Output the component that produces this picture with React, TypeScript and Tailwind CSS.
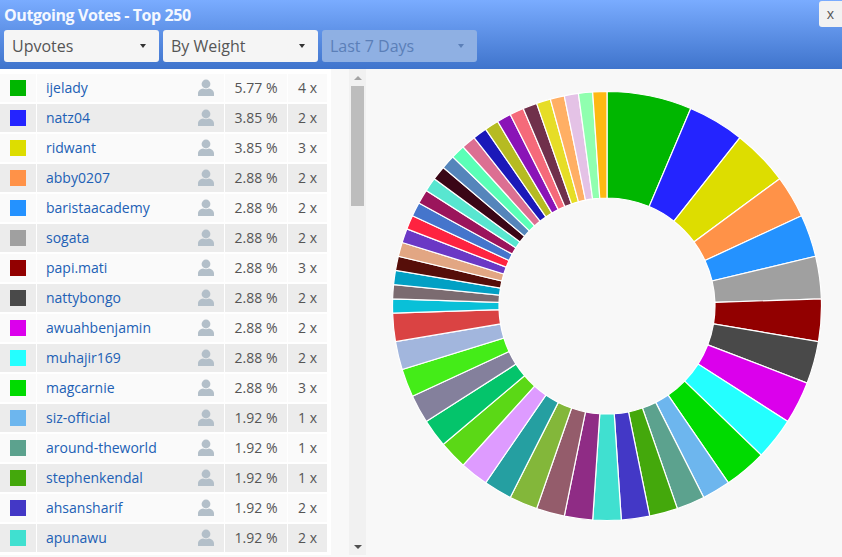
const rows = [
	{ name: "ijelady", color: "#00b600", pct: "5.77 %", count: "4 x" },
	{ name: "natz04", color: "#2424ff", pct: "3.85 %", count: "2 x" },
	{ name: "ridwant", color: "#dddd00", pct: "3.85 %", count: "3 x" },
	{ name: "abby0207", color: "#ff9248", pct: "2.88 %", count: "2 x" },
	{ name: "baristaacademy", color: "#2492ff", pct: "2.88 %", count: "2 x" },
	{ name: "sogata", color: "#a0a0a0", pct: "2.88 %", count: "2 x" },
	{ name: "papi.mati", color: "#920000", pct: "2.88 %", count: "3 x" },
	{ name: "nattybongo", color: "#494949", pct: "2.88 %", count: "2 x" },
	{ name: "awuahbenjamin", color: "#db00ec", pct: "2.88 %", count: "2 x" },
	{ name: "muhajir169", color: "#24ffff", pct: "2.88 %", count: "2 x" },
	{ name: "magcarnie", color: "#00db00", pct: "2.88 %", count: "3 x" },
	{ name: "siz-official", color: "#6db6ee", pct: "1.92 %", count: "1 x" },
	{ name: "around-theworld", color: "#5ca28e", pct: "1.92 %", count: "1 x" },
	{ name: "stephenkendal", color: "#44a80c", pct: "1.92 %", count: "1 x" },
	{ name: "ahsansharif", color: "#4338c6", pct: "1.92 %", count: "2 x" },
	{ name: "apunawu", color: "#40e0d0", pct: "1.92 %", count: "2 x" },
];

// [units, colour], clockwise from twelve o'clock
const slices: [number, string][] = [
	[6, "#00b600"], [4, "#2424ff"], [4, "#dddd00"], [3, "#ff9248"], [3, "#2492ff"], [3, "#a0a0a0"],
	[3, "#920000"], [3, "#494949"], [3, "#db00ec"], [3, "#24ffff"], [3, "#00db00"], [2, "#6db6ee"],
	[2, "#5ca28e"], [2, "#44a80c"], [2, "#4338c6"], [2, "#40e0d0"], [2, "#8f2c85"], [2, "#945c6b"],
	[2, "#83b73a"], [2, "#259fa1"], [2, "#de9bff"], [2, "#5bd816"], [2, "#04c46b"], [2, "#84809c"],
	[2, "#44ec18"], [2, "#a2b6dd"], [2, "#da4343"], [1, "#09c0d8"], [1, "#7b6b70"], [1, "#02a0c4"],
	[1, "#560e09"], [1, "#e2a683"], [1, "#6a38c5"], [1, "#fe2340"], [1, "#4575cc"], [1, "#9b155c"],
	[1, "#58e6d0"], [1, "#3a0616"], [1, "#5585bb"], [1, "#5affb7"], [1, "#dc6f92"], [1, "#1b19b9"],
	[1, "#b6bb22"], [1, "#8a14b7"], [1, "#f56a7a"], [1, "#70304b"], [1, "#e6dd26"], [1, "#ffaf64"],
	[1, "#e4c2e6"], [1, "#90ffaf"], [1, "#fdb913"],
];

const total = slices.reduce((sum, s) => sum + s[0], 0);

function slicePath(from: number, to: number) {
	const R = 214.5;
	const r = 108;
	const c = 216;
	const a = (from / total) * Math.PI * 2;
	const b = (to / total) * Math.PI * 2;
	const p = (rad: number, t: number) =>
		`${(c + rad * Math.sin(t)).toFixed(2)} ${(c - rad * Math.cos(t)).toFixed(2)}`;
	return `M${p(R, a)}A${R} ${R} 0 0 1 ${p(R, b)}L${p(r, b)}A${r} ${r} 0 0 0 ${p(r, a)}Z`;
}

function Donut() {
	let at = 0;
	return (
		<svg width="432" height="432" viewBox="0 0 432 432">
			{slices.map(([units, color]) => {
				const d = slicePath(at, at + units);
				at += units;
				return <path key={color} d={d} fill={color} stroke="#ffffff" strokeWidth="1.2" />;
			})}
		</svg>
	);
}

function PersonIcon() {
	return (
		<svg width="18" height="18" viewBox="0 0 18 18" fill="#b3bfc9">
			<circle cx="9" cy="5" r="4.4" />
			<path d="M1 17v-2.6C1 11.6 3.6 10 6 9.6c1.8 1 4.2 1 6 0 2.4.4 5 2 5 4.8V17z" />
		</svg>
	);
}

function Select({ label, disabled }: { label: string; disabled?: boolean }) {
	return (
		<div
			className={`flex h-8 w-[155px] items-center justify-between rounded-[3px] pl-2 pr-[13px] text-base ${
				disabled ? "bg-[#8fb0e3] text-[#5b7fb8]" : "bg-[#f5f5f5] text-[#555555]"
			}`}
		>
			{label}
			<span
				className={`h-0 w-0 border-x-[3px] border-t-[4px] border-x-transparent ${
					disabled ? "border-t-[#5b7fb8]" : "border-t-[#333333]"
				}`}
			/>
		</div>
	);
}

export default function App() {
	return (
		<div className="flex h-[557px] w-[842px] flex-col overflow-hidden bg-[#f8f8f8] font-['Open_Sans',sans-serif]">
			{/* Header */}
			<div className="relative h-[69px] shrink-0 bg-gradient-to-b from-[#7aacff] to-[#3f74cc] pl-1">
				<h1 className="h-[30px] pt-[3px] text-base leading-6 font-bold tracking-[-0.42px] text-[#f4f8ff]">
					Outgoing Votes - Top 250
				</h1>
				<div className="flex gap-1">
					<Select label="Upvotes" />
					<Select label="By Weight" />
					<Select label="Last 7 Days" disabled />
				</div>
				<button className="absolute top-px right-0 h-[26px] w-[23px] rounded-l-[3px] bg-[#f2f2f2] text-sm text-[#555555]">
					x
				</button>
			</div>

			<div className="flex min-h-0 flex-1">
				{/* Table */}
				<div className="h-[486px] w-[331px] shrink-0 overflow-hidden bg-white pt-[5px]">
					<div className="flex w-[327px] flex-col gap-[2px] text-sm text-[#555555]">
						{rows.map((row, i) => {
							const cell = i % 2 ? "bg-[#ececec]" : "bg-[#fafafa]";
							return (
								<div key={row.name} className="flex h-7 shrink-0 gap-px">
									<div className={`flex w-9 shrink-0 items-center justify-center ${cell}`}>
										<span className="h-4 w-4" style={{ backgroundColor: row.color }} />
									</div>
									<div className={`flex w-[187px] shrink-0 items-center justify-between pr-[9px] pl-[9px] ${cell}`}>
										<span className="text-[#2160b5]">{row.name}</span>
										<PersonIcon />
									</div>
									<div className={`flex w-[62px] shrink-0 items-center justify-center ${cell}`}>
										{row.pct}
									</div>
									<div className={`flex flex-1 items-center justify-center ${cell}`}>
										{row.count}
									</div>
								</div>
							);
						})}
					</div>
				</div>

				{/* Scrollbar */}
				<div className="ml-[18px] flex h-[486px] w-[17px] shrink-0 flex-col items-center bg-[#f1f1f1]">
					<span className="mt-[7px] h-0 w-0 border-x-4 border-b-[4px] border-x-transparent border-b-[#a3a3a3]" />
					<div className="mt-[6px] h-[120px] w-[13px] bg-[#bdbdbd]" />
					<span className="mt-auto mb-[6px] h-0 w-0 border-x-4 border-t-[4px] border-x-transparent border-t-[#505050]" />
				</div>

				{/* Chart */}
				<div className="flex-1 pt-[21px] pl-[25px]">
					<Donut />
				</div>
			</div>
		</div>
	);
}
